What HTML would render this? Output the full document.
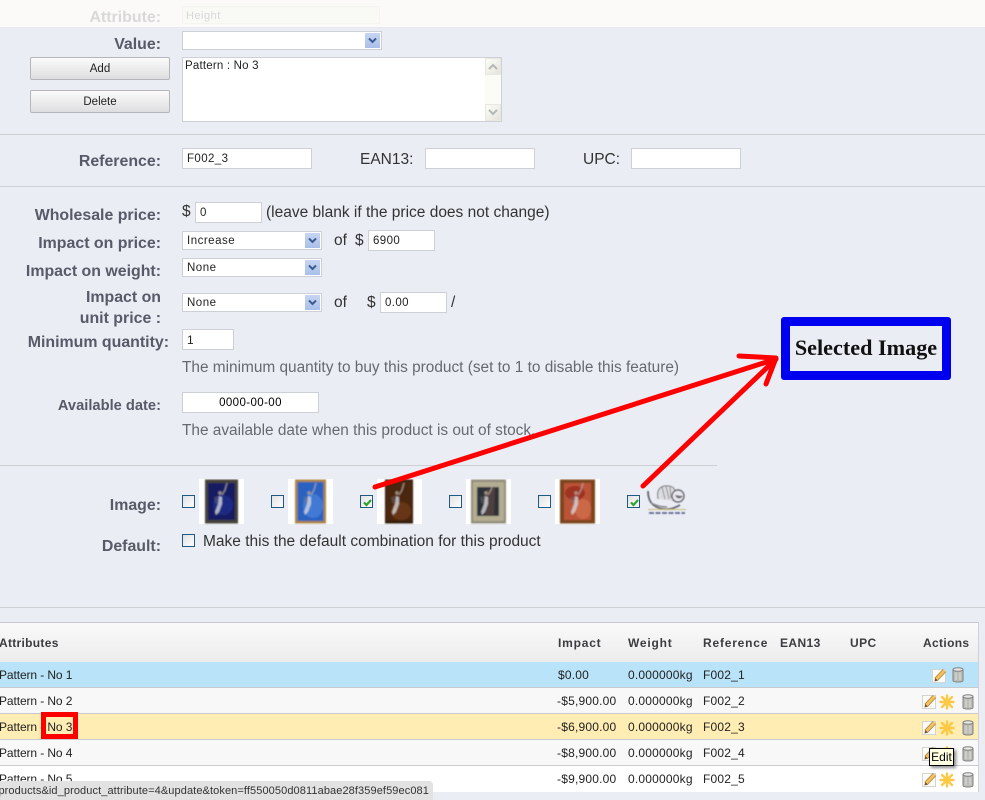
<!DOCTYPE html>
<html><head><meta charset="utf-8">
<style>
html,body{margin:0;padding:0}
body{width:985px;height:800px;overflow:hidden;position:relative;background:#ebedf5;font-family:"Liberation Sans",sans-serif;color:#222}
div,span{position:absolute;white-space:nowrap;box-sizing:border-box}
.l{font-weight:bold;font-size:15.9px;color:#585a68;text-align:right;right:824px;line-height:16px}
.t{font-size:15.5px;color:#333;line-height:16px}
.h{font-size:15.4px;color:#666a70;line-height:16px}
.i{background:#fff;border:1px solid #cdd0d6;font-size:11.5px;color:#222;height:21px;line-height:20px;padding-left:4px;letter-spacing:.4px}
.s{background:#fff;border:1px solid #cdd0d6;font-size:11.5px;color:#222;height:19px;line-height:19px;padding-left:4px;letter-spacing:.5px}
.s:after{content:"";position:absolute;right:1px;top:1px;width:15px;height:15px;background:linear-gradient(#c6d5f2,#a9c0ea)}
.s svg{position:absolute;right:4px;top:5px;z-index:2}
.b{left:30px;width:140px;height:23px;border:1px solid #b4b6bc;border-radius:2px;background:linear-gradient(#fbfbfb,#dedee0);font-size:11.5px;text-align:center;line-height:23px;color:#222}
.hr{left:0;height:1px;background:#cfd0d4;border-bottom:0}
.c{width:13px;height:13px;border:1px solid #1f5a84;background:linear-gradient(135deg,#e2e2e2,#fdfdfd)}
.c svg{position:absolute;left:1px;top:1px}
.r{left:0;width:978px;height:26px;border-bottom:1px solid #c9cad0}
.r span{font-size:12px;line-height:27px;top:0;color:#222;letter-spacing:.2px}
.r span.p{letter-spacing:-.1px}
.th{font-size:12px;font-weight:bold;color:#3c3c40;top:636px;line-height:15px;letter-spacing:.8px}
.ic{position:absolute}
</style></head>
<body>
<div style="left:0;top:0;width:985px;height:28px;background:#fbfaf8;border-bottom:1px solid #e8e9ee"></div>
<div class="l" style="top:10px;color:#d9d9d9">Attribute:</div>
<div style="left:182px;top:6px;width:198px;height:18px;background:#f9f9f6;border:1px solid #f4f4f1;font-size:11px;color:#d8d8d8;padding-left:3px;line-height:18px;letter-spacing:.5px">Height</div>
<div class="l" style="top:37px">Value:</div>
<div class="s" style="left:182px;top:31px;width:200px"><svg width="9" height="7" viewBox="0 0 9 7"><path d="M1 1.5L4.5 5L8 1.5" fill="none" stroke="#3a5a90" stroke-width="2"/></svg></div>
<div class="b" style="top:57px">Add</div>
<div class="b" style="top:90px">Delete</div>
<div style="left:182px;top:57px;width:320px;height:65px;background:#fff;border:1px solid #cdd0d6;font-size:11.5px;line-height:16px;padding:0 0 0 2px;color:#222;letter-spacing:.2px">Pattern : No 3
  <div style="right:0;top:0;width:16px;height:63px;background:#fcfcf6">
    <div style="left:0;top:0;width:16px;height:17px;background:linear-gradient(135deg,#fdfdf8,#e4e4dc);border:1px solid #e8e8e0"></div>
    <div style="left:0;bottom:0;width:16px;height:17px;background:linear-gradient(135deg,#fdfdf8,#e4e4dc);border:1px solid #e8e8e0"></div>
    <svg style="position:absolute;left:3px;top:5px" width="10" height="7"><path d="M1 6L5 2L9 6" fill="none" stroke="#b4b8b4" stroke-width="2"/></svg>
    <svg style="position:absolute;left:3px;bottom:5px" width="10" height="7"><path d="M1 1L5 5L9 1" fill="none" stroke="#b4b8b4" stroke-width="2"/></svg>
  </div>
</div>
<div class="hr" style="top:134px;width:985px"></div>
<div class="l" style="top:154px">Reference:</div>
<div class="i" style="left:182px;top:148px;width:130px">F002_3</div>
<div class="t" style="left:360px;top:152px">EAN13:</div>
<div class="i" style="left:425px;top:148px;width:110px"></div>
<div class="t" style="left:583px;top:152px">UPC:</div>
<div class="i" style="left:631px;top:148px;width:110px"></div>
<div class="hr" style="top:186px;width:985px"></div>

<div class="l" style="top:208px">Wholesale price:</div>
<div class="t" style="left:182px;top:204px">$</div>
<div class="i" style="left:195px;top:202px;width:67px">0</div>
<div class="t" style="left:266px;top:205px">(leave blank if the price does not change)</div>

<div class="l" style="top:236px">Impact on price:</div>
<div class="s" style="left:182px;top:231px;width:140px">Increase<svg width="9" height="7" viewBox="0 0 9 7"><path d="M1 1.5L4.5 5L8 1.5" fill="none" stroke="#3a5a90" stroke-width="2"/></svg></div>
<div class="t" style="left:334px;top:233px">of</div>
<div class="t" style="left:355px;top:233px">$</div>
<div class="i" style="left:368px;top:230px;width:67px">6900</div>

<div class="l" style="top:264px">Impact on weight:</div>
<div class="s" style="left:182px;top:258px;width:140px">None<svg width="9" height="7" viewBox="0 0 9 7"><path d="M1 1.5L4.5 5L8 1.5" fill="none" stroke="#3a5a90" stroke-width="2"/></svg></div>

<div class="l" style="top:290px">Impact on</div>
<div class="l" style="top:311px">unit price :</div>
<div class="s" style="left:182px;top:293px;width:140px">None<svg width="9" height="7" viewBox="0 0 9 7"><path d="M1 1.5L4.5 5L8 1.5" fill="none" stroke="#3a5a90" stroke-width="2"/></svg></div>
<div class="t" style="left:334px;top:295px">of</div>
<div class="t" style="left:367px;top:295px">$</div>
<div class="i" style="left:380px;top:292px;width:67px">0.00</div>
<div class="t" style="left:451px;top:295px">/</div>

<div class="l" style="top:335px;right:816px">Minimum quantity:</div>
<div class="i" style="left:182px;top:329px;width:52px;font-size:12px">1</div>
<div class="h" style="left:182px;top:360px">The minimum quantity to buy this product (set to 1 to disable this feature)</div>

<div class="l" style="top:398px;font-size:14.7px">Available date:</div>
<div class="i" style="left:182px;top:392px;width:137px;text-align:center;padding:0;color:#000">0000-00-00</div>
<div class="h" style="left:182px;top:423px">The available date when this product is out of stock.</div>

<div class="hr" style="top:465px;width:717px"></div>

<div class="l" style="top:498px">Image:</div>
<div class="c" style="left:182px;top:495px"></div>
<div class="c" style="left:271px;top:495px"></div>
<div class="c" style="left:360px;top:495px"><svg width="11" height="11"><path d="M2 5.5L4.5 8L9 3" fill="none" stroke="#2fa32f" stroke-width="2.2"/></svg></div>
<div class="c" style="left:449px;top:495px"></div>
<div class="c" style="left:538px;top:495px"></div>
<div class="c" style="left:627px;top:495px"><svg width="11" height="11"><path d="M2 5.5L4.5 8L9 3" fill="none" stroke="#2fa32f" stroke-width="2.2"/></svg></div>

<svg class="ic" style="left:199px;top:479px" width="490" height="46" viewBox="0 0 490 46">
  <defs>
    <filter id="bl" x="-10%" y="-10%" width="120%" height="120%"><feGaussianBlur stdDeviation=".8"/></filter>
    <filter id="bl2" x="-10%" y="-10%" width="120%" height="120%"><feGaussianBlur stdDeviation=".45"/></filter>
    <g id="fig" opacity=".8">
      <path d="M28 4L26 11L23 16" fill="none" stroke="#b8b0a8" stroke-width="1.2"/>
      <circle cx="21" cy="14" r="1.7" fill="#b8a694"/>
      <path d="M20 17L23 18L23 25L20 33L17 36L16 33L19 25Z" fill="#d8d8dc"/>
      <path d="M15 18L20 17L19 25L16 24Z" fill="#77767e" opacity=".5"/>
    </g>
  </defs>
  <rect width="45" height="45" fill="#fff"/>
  <rect x="89" width="45" height="45" fill="#fff"/>
  <rect x="178" width="45" height="45" fill="#fff"/>
  <rect x="267" width="45" height="45" fill="#fff"/>
  <rect x="356" width="45" height="45" fill="#fff"/>
  <g filter="url(#bl)">
    <rect x="6" y=".5" width="33" height="44" fill="#45433a"/><rect x="9" y="4" width="27" height="37" fill="#151c62"/><ellipse cx="24" cy="26" rx="10" ry="10" fill="#23359a" opacity=".6"/><use href="#fig"/>
    <rect x="96" y=".5" width="31" height="44" fill="#ab8440"/><rect x="98.5" y="3" width="26" height="39" fill="#2a62c2"/><ellipse cx="114" cy="27" rx="10" ry="12" fill="#4f8ae0" opacity=".6"/><use href="#fig" x="89"/>
    <rect x="186" y=".5" width="28" height="44" fill="#2e1a0c"/><rect x="187" y="2" width="26" height="40" fill="#4a2610"/><ellipse cx="202" cy="32" rx="10" ry="9" fill="#7c4016" opacity=".6"/><use href="#fig" x="177"/>
    <rect x="272" y=".5" width="35" height="44" fill="#8f8c7c"/><rect x="274" y="3" width="31" height="39" fill="#b4ad92"/><rect x="278" y="8" width="22" height="29" fill="#2a3238"/><path d="M286 12L296 8L295 36L286 36Z" fill="#6a4a44" opacity=".6"/><use href="#fig" x="266"/>
    <rect x="361" y=".5" width="35" height="44" fill="#7a451e"/><rect x="365" y="4" width="27" height="37" fill="#bb5338"/><ellipse cx="376" cy="14" rx="10" ry="7" fill="#8c1e14" opacity=".6"/><ellipse cx="384" cy="30" rx="8" ry="10" fill="#d57850" opacity=".6"/><use href="#fig" x="356"/>
  </g>
  <g filter="url(#bl2)">
    <path d="M449 12C449 22 453 28 464 30C470 31 476 29 481 26" fill="none" stroke="#66666e" stroke-width="1.8"/>
    <path d="M452 24C456 26 462 28 468 28" fill="none" stroke="#8a8a90" stroke-width="1.5"/>
    <path d="M459 20C457 10 462 6 470 7C477 8 478 15 474 22" fill="#dcdce0" stroke="#7a7a82" stroke-width="1"/>
    <path d="M463 8L466 20M467 7L470 20M471 8L472 19" stroke="#85858d" stroke-width=".9" fill="none"/>
    <circle cx="479" cy="17" r="6" fill="#e8e8ee" stroke="#66666e" stroke-width="1.4"/>
    <path d="M476 16C478 21 482 20 484 17" fill="#77777f"/>
    <rect x="449" y="30" width="38" height="1" fill="#c8bc78"/>
    <path d="M450 34H486" stroke="#6f789c" stroke-width="2" stroke-dasharray="5 1.5"/>
  </g>
</svg>

<div class="l" style="top:539px">Default:</div>
<div class="c" style="left:182px;top:534px"></div>
<div class="t" style="left:203px;top:534px">Make this the default combination for this product</div>

<div class="hr" style="top:607px;width:985px"></div>

<!-- table -->
<div style="left:0;top:622px;width:979px;height:170px;background:#fff;border-top:1px solid #c8c9d0;border-right:1px solid #d0d0d6;border-bottom:2px solid #c6c7cc"></div>
<div style="left:0;top:623px;width:978px;height:39px;background:linear-gradient(#fafafa,#ececec)"></div>
<div class="th" style="left:-1px;letter-spacing:.3px">Attributes</div>
<div class="th" style="left:558px">Impact</div>
<div class="th" style="left:628px">Weight</div>
<div class="th" style="left:703px">Reference</div>
<div class="th" style="left:780px;letter-spacing:.4px">EAN13</div>
<div class="th" style="left:850px;letter-spacing:.4px">UPC</div>
<div class="th" style="left:923px;letter-spacing:.35px">Actions</div>

<div class="r" style="top:662px;background:#b9e3f8"><span class="p" style="left:-1px">Pattern - No 1</span><span style="left:558px">$0.00</span><span style="left:628px">0.000000kg</span><span style="left:703px">F002_1</span></div>
<div class="r" style="top:688px;background:#f8f8f8"><span class="p" style="left:-1px">Pattern - No 2</span><span style="left:557px">-$5,900.00</span><span style="left:628px">0.000000kg</span><span style="left:703px">F002_2</span></div>
<div class="r" style="top:714px;background:#ffedb3"><span class="p" style="left:-1px">Pattern - No 3</span><span style="left:557px">-$6,900.00</span><span style="left:628px">0.000000kg</span><span style="left:703px">F002_3</span></div>
<div class="r" style="top:740px;background:#f8f8f8"><span class="p" style="left:-1px">Pattern - No 4</span><span style="left:557px">-$8,900.00</span><span style="left:628px">0.000000kg</span><span style="left:703px">F002_4</span></div>
<div class="r" style="top:766px;background:#fff;border-bottom:0"><span class="p" style="left:-1px">Pattern - No 5</span><span style="left:557px">-$9,900.00</span><span style="left:628px">0.000000kg</span><span style="left:703px">F002_5</span></div>

<svg class="ic" style="left:0;top:0" width="985" height="800" viewBox="0 0 985 800">
  <defs>
    <g id="ed"><rect x=".5" y="1.5" width="13" height="13" fill="#fbfbf8" stroke="#d4d4d0"/><path d="M4 11.5L12.5 2.5" stroke="#a87c3c" stroke-width="4.4"/><path d="M4 11.5L12.5 2.5" stroke="#f3c05c" stroke-width="3"/><path d="M2.5 13.5L3.2 10L5.8 12.5Z" fill="#6a4c2a"/></g>
    <g id="st"><g stroke="#fdc944" stroke-width="2.4" stroke-linecap="round"><path d="M8 1.5V14.5"/><path d="M1.5 8H14.5"/><path d="M3 3L13 13"/><path d="M3 13L13 3"/></g></g>
    <g id="tr"><path d="M1 2.5V13.5C1 15.5 11 15.5 11 13.5V2.5Z" fill="#bdbdb8" stroke="#808080"/><ellipse cx="6" cy="2.5" rx="5" ry="1.8" fill="#e6e6e4" stroke="#808080"/><path d="M4 5.5V13M8 5.5V13" stroke="#dcdcd8"/></g>
  </defs>
  <use href="#ed" x="932" y="668"/><use href="#tr" x="952" y="667"/>
  <use href="#ed" x="922" y="694"/><use href="#st" x="939" y="694"/><use href="#tr" x="962" y="694"/>
  <use href="#ed" x="922" y="720"/><use href="#st" x="939" y="720"/><use href="#tr" x="962" y="720"/>
  <use href="#ed" x="922" y="746"/><use href="#st" x="939" y="746"/><use href="#tr" x="962" y="746"/>
  <use href="#ed" x="922" y="772"/><use href="#st" x="939" y="772"/><use href="#tr" x="962" y="772"/>
  <!-- red arrows -->
  <g fill="none" stroke="#f00" stroke-width="5" stroke-linecap="round" stroke-linejoin="round">
    <path d="M375 487L776 359"/>
    <path d="M643 486L776 359"/>
    <path d="M739 356L776 358L766 384"/>
  </g>
  <rect x="43.5" y="714.5" width="32" height="22" fill="none" stroke="#f00" stroke-width="5"/>
</svg>

<div style="left:781px;top:317px;width:170px;height:63px;border:9px solid #0000f0;border-radius:3px;background:#ebedf5;font-family:'Liberation Serif',serif;font-weight:bold;font-size:22.2px;line-height:43px;text-align:center;color:#111;padding-top:0">Selected Image</div>

<div style="left:929px;top:748px;width:25px;height:18px;background:#ffffe1;border:1px solid #000;font-size:12px;line-height:17px;text-align:center;color:#000;box-shadow:2px 2px 3px rgba(0,0,0,.45)">Edit</div>

<div style="left:-1px;top:781px;width:434px;height:19px;background:#e2e2e2;border-radius:0 4px 0 0;overflow:hidden"><span style="right:4px;top:0;font-size:11px;line-height:20px;color:#333;letter-spacing:.1px">products&amp;id_product_attribute=4&amp;update&amp;token=ff550050d0811abae28f359ef59ec081</span></div>
</body></html>
